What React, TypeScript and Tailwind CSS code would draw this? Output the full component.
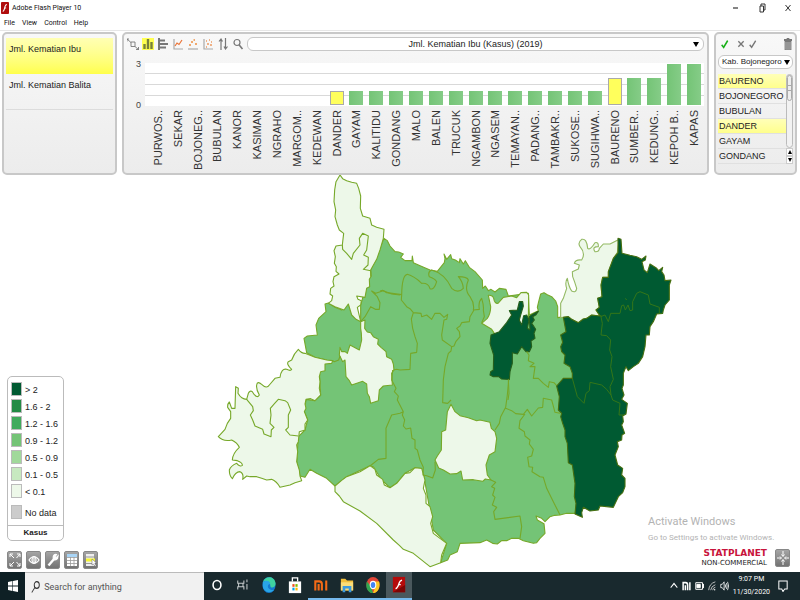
import type { ReactNode } from "react";

const LIGHT = "#edf8e9";
const MID = "#74c476";
const DARK = "#005a32";

const chart: [string, number][] = [
  ["PURWOS..", 0], ["SEKAR", 0], ["BOJONEG..", 0], ["BUBULAN", 0], ["KANOR", 0],
  ["KASIMAN", 0], ["NGRAHO", 0], ["MARGOM..", 0], ["KEDEWAN", 0], ["DANDER", 1],
  ["GAYAM", 1], ["KALITIDU", 1], ["GONDANG", 1], ["MALO", 1], ["BALEN", 1],
  ["TRUCUK", 1], ["NGAMBON", 1], ["NGASEM", 1], ["TEMAYAN..", 1], ["PADANG..", 1],
  ["TAMBAKR..", 1], ["SUKOSE..", 1], ["SUGIHWA..", 1], ["BAURENO", 2], ["SUMBER..", 2],
  ["KEDUNG..", 2], ["KEPOH B..", 3], ["KAPAS", 3],
];
const selected = ["DANDER", "BAURENO"];
const districts = ["BAURENO", "BOJONEGORO", "BUBULAN", "DANDER", "GAYAM", "GONDANG"];
const classes: [string, string][] = [
  ["#005a32", "> 2"], ["#238b45", "1.6 - 2"], ["#41ab5d", "1.2 - 1.6"], ["#74c476", "0.9 - 1.2"],
  ["#a1d99b", "0.5 - 0.9"], ["#c7e9c0", "0.1 - 0.5"], ["#edf8e9", "< 0.1"],
];

const PANEL = "rounded-[5px] border-2 border-[#c8c8c8] bg-linear-to-b from-[#f8f8f8] to-[#ececec]";
const SYSTEM_FONT = "font-[Roboto,'Open_Sans',sans-serif]";

function Icon({ children, box = "0 0 12 12", className = "h-3 w-3" }: { children: ReactNode; box?: string; className?: string }) {
  return (
    <svg viewBox={box} className={className} preserveAspectRatio="none" fill="none" stroke="#777" strokeWidth="1.2" aria-hidden="true">
      {children}
    </svg>
  );
}

function ToolButton({ label, children, className = "" }: { label: string; children: ReactNode; className?: string }) {
  return (
    <button type="button" aria-label={label} className={`flex h-3 items-center justify-center ${className}`}>
      {children}
    </button>
  );
}

function TitleBar() {
  return (
    <header className={`border-b border-[#e6e6e6] bg-white text-[#111] ${SYSTEM_FONT}`}>
      <div className="flex h-4 items-center pr-2 pl-px">
        <svg viewBox="0 0 9 12" preserveAspectRatio="none" className="h-3 w-2" aria-hidden="true">
          <rect width="9" height="12" rx="1" fill="#b00d0d" />
          <path d="M6.6 2.5C4.5 2.8 4.4 5 3.8 7S2.9 9.3 2 9.5M3.7 6H5.8" stroke="#fff" strokeWidth="1.2" fill="none" />
        </svg>
        <h1 className="ml-[3px] flex-1 text-[7px] leading-4">Adobe Flash Player 10</h1>
        <div className="flex w-15 items-center justify-between">
          <button type="button" aria-label="Minimize"><Icon box="0 0 8 10" className="h-2.5 w-2"><path d="M1 5H6" stroke="#333" /></Icon></button>
          <button type="button" aria-label="Restore"><Icon box="0 0 8 10" className="h-2.5 w-2"><path d="M2 3H5.5V9H2ZM3 3V1H7V7H5.5" stroke="#333" strokeWidth="1" /></Icon></button>
          <button type="button" aria-label="Close"><Icon box="0 0 8 10" className="h-2.5 w-2"><path d="M1.5 2L6.5 8M6.5 2L1.5 8" stroke="#333" strokeWidth="1" /></Icon></button>
        </div>
      </div>
      <nav className="flex h-3.5 items-center gap-[7px] pl-1 text-[7px] leading-3">
        {["File", "View", "Control", "Help"].map((m) => <button type="button" key={m}>{m}</button>)}
      </nav>
    </header>
  );
}

function Indicators() {
  return (
    <aside className={`w-[115px] shrink-0 px-0.5 py-1 text-[9px] leading-3 ${PANEL}`}>
      <button type="button" className="flex h-9 w-full items-start bg-linear-to-b from-[#ffffb4] to-[#ffff4a] px-[3px] pt-[5px]">
        Jml. Kematian Ibu
      </button>
      <button type="button" className="flex h-9 w-full items-start border-b border-[#dcdcdc] px-[3px] pt-[5px]">
        Jml. Kematian Balita
      </button>
    </aside>
  );
}

function ChartTools() {
  return (
    <div className="flex h-3.5 shrink-0 items-center gap-[3px]">
      <ToolButton label="Map link"><Icon><path d="M0 1L4 4.5M8 8.5L12 12M0 3.500V1H2M4 4H8V8.500H4ZM11.500 9V11.500H9" strokeWidth="0.900" /></Icon></ToolButton>
      <ToolButton label="Column chart" className="bg-[#ffff52]"><Icon><path d="M2.5 11V6M6 11V1M9.5 11V4" stroke="#77803a" strokeWidth="2.4" /></Icon></ToolButton>
      <ToolButton label="Bar chart"><Icon><path d="M2 0V12M3 2.5H8M3 6H11M3 9.5H9" strokeWidth="2" /></Icon></ToolButton>
      <ToolButton label="Line chart"><Icon><path d="M2 1V11H11" stroke="#aaa" /><path d="M3 8L5 5L7 6.5L10 2" stroke="#eb7336" /></Icon></ToolButton>
      <ToolButton label="Time scatter plot"><Icon><path d="M1 11H11" stroke="#aaa" /><path d="M2 7H4M4 4H6M6.5 2H8M8 6H10" stroke="#ed8f42" strokeWidth="1.7" /></Icon></ToolButton>
      <ToolButton label="Scatter plot"><Icon><path d="M2 1V11H11" stroke="#aaa" /><path d="M4 3H5M7 2H8M5 6H7M8 7H10M4 9H5M9 4H10" stroke="#ed9a62" strokeWidth="1.6" /></Icon></ToolButton>
      <ToolButton label="Sort"><Icon><path d="M4 12V1M2 3.5L4 1L5.5 3.5M8.5 0V11M7 8.5L8.5 11L10.5 8.5" /></Icon></ToolButton>
      <ToolButton label="Zoom"><Icon><circle cx="5" cy="4.5" r="3" /><path d="M7.2 7L10.5 11" strokeWidth="1.6" /></Icon></ToolButton>
    </div>
  );
}

function ChartPanel() {
  return (
    <section className={`flex min-w-0 flex-1 flex-col pr-[3px] pl-[3px] ${PANEL}`}>
      <div className="mt-[3px] flex items-center gap-[3px]">
        <ChartTools />
        <div className="relative flex h-3.5 flex-1 rounded-md border border-[#c8c8c8] bg-white">
          <select aria-label="Indicator" className="h-3 w-full appearance-none bg-transparent text-center text-[9px] leading-3">
            <option>Jml. Kematian Ibu (Kasus) (2019)</option>
          </select>
          <span className="pointer-events-none absolute top-1 right-1 border-x-[3px] border-t-[5px] border-x-transparent border-t-black" />
        </div>
      </div>
      <div className="mt-3 flex h-[43px]">
        <div className="flex w-[18px] flex-col justify-between pr-1 text-right text-[9px] leading-[10px] text-[#444]">
          <span className="-mt-1">3</span>
          <span className="-mb-1">0</span>
        </div>
        <div className="grid flex-1 grid-cols-[repeat(28,minmax(0,1fr))] items-end bg-white bg-[linear-gradient(to_bottom,transparent_10px,#d9d9d9_10px,#d9d9d9_11px,transparent_11px,transparent_21px,#d9d9d9_21px,#d9d9d9_22px,transparent_22px,transparent_32px,#d9d9d9_32px,#d9d9d9_33px,transparent_33px)] pb-px pl-[3px]">
          {chart.map(([name, v]) => (
            <span
              key={name}
              className={`mx-auto w-3.5 ${selected.includes(name) ? "border border-[#aaa] bg-[#ffff5c]" : "bg-linear-to-r from-[#74c476] to-[#85cc87]"}`}
              style={{ height: v === 0 ? 0 : v * 14 - (v > 1 ? 1 : 0) }}
            />
          ))}
        </div>
      </div>
      <div className="mt-1 ml-[18px] grid h-[63px] grid-cols-[repeat(28,minmax(0,1fr))] pl-[3px]">
        {chart.map(([name]) => (
          <div key={name} className="flex items-start justify-center">
            <span className="rotate-180 text-[11px] leading-3 whitespace-nowrap text-[#333] [writing-mode:vertical-rl]">{name}</span>
          </div>
        ))}
      </div>
    </section>
  );
}

function DistrictPanel() {
  return (
    <aside className={`w-[83px] shrink-0 px-0.5 ${PANEL}`}>
      <div className="mt-[3px] flex h-3.5 items-center pr-px pl-[3px]">
        <ToolButton label="Select all"><Icon className="h-2.5 w-2"><path d="M1 7L4 10L10 2" stroke="#18b018" strokeWidth="2.2" /></Icon></ToolButton>
        <ToolButton label="Clear selection" className="ml-2"><Icon className="h-2 w-2"><path d="M2 2L10 10M10 2L2 10" strokeWidth="2" /></Icon></ToolButton>
        <ToolButton label="Invert selection" className="ml-1"><Icon className="h-2.5 w-2"><path d="M1 7L4 10L10 2" strokeWidth="2" /></Icon></ToolButton>
        <ToolButton label="Delete" className="ml-auto"><Icon className="h-3 w-2"><path d="M0 2H12M4 1H8" strokeWidth="2" /><path d="M1.5 3.5H10.5V12H1.5Z" fill="#aaa" /><path d="M4.5 4V11M7.5 4V11" /></Icon></ToolButton>
      </div>
      <div className="relative mt-1 flex h-3.5 rounded-md border border-[#c8c8c8] bg-white">
        <select aria-label="Region" className="h-3 w-full appearance-none bg-transparent pl-[3px] text-[8px] leading-3">
          <option>Kab. Bojonegoro</option>
        </select>
        <span className="pointer-events-none absolute top-1 right-0.5 border-x-[3px] border-t-[5px] border-x-transparent border-t-black" />
      </div>
      <div className="mt-[5px] flex">
        <ul className="min-w-0 flex-1 text-[9px]">
          {districts.map((d) => (
            <li key={d} className="border-b border-[#e0e0e0]">
              <button type="button" className={`block h-3.5 w-full pl-px text-left leading-[14px] ${selected.includes(d) ? "bg-linear-to-b from-[#ffffb8] to-[#ffff8c]" : ""}`}>{d}</button>
            </li>
          ))}
        </ul>
        <div className="flex w-[7px] flex-col items-center" role="group" aria-label="Scroll list">
          <div className="w-full flex-1 rounded-full border border-[#bbb] bg-[#f2f2f2]">
            <div className="flex h-[26px] items-center justify-center rounded-full border border-[#aaa] bg-[#eee]">
              <span className="h-1.5 w-[3px] border-y border-[#aaa]" />
            </div>
          </div>
          <button type="button" aria-label="Scroll up" className="flex h-2 w-full items-center justify-center border border-[#ccc] bg-white"><span className="border-x-2 border-b-4 border-x-transparent border-b-black" /></button>
          <button type="button" aria-label="Scroll down" className="flex h-2 w-full items-center justify-center border border-[#ccc] bg-white"><span className="border-x-2 border-t-4 border-x-transparent border-t-black" /></button>
        </div>
      </div>
    </aside>
  );
}

function DistrictMap() {
  return (
    <svg viewBox="0 525 2400 1191" className="absolute inset-0 h-full w-full" role="img" aria-label="Map of Kab. Bojonegoro">
      <g stroke="#76a829" strokeWidth="3.3" strokeLinejoin="round" fill="none">
        {/* body of the regency */}
        <path fill={MID} d="M1152 715L1162 722L1170 738L1185 755L1196 756L1210 762L1202 772L1215 782L1236 782L1237 768L1240 788L1262 798L1290 810L1312 814L1333 788L1335 776L1332 762L1340 778L1352 764L1355 776L1366 780L1378 788L1380 776L1390 792L1396 782L1408 802L1425 815L1447 840L1448 865L1456 858L1465 872L1473 868L1485 876L1498 865L1518 868L1525 888L1585 880L1588 945L1615 932L1612 922L1616 905L1622 882L1632 878L1642 884L1655 890L1667 903L1673 920L1673 953L1695 950L1760 1140L1760 1400L1725 1540L1700 1540L1680 1545L1664 1546L1650 1550L1635 1565L1625 1555L1608 1548L1612 1560L1632 1571L1635 1600L1620 1615L1610 1628L1600 1630L1570 1622L1555 1615L1535 1615L1520 1622L1505 1622L1492 1632L1478 1630L1460 1620L1440 1628L1380 1630L1372 1655L1350 1665L1343 1680L1322 1688L1340 1630L1300 1590L1272 1430L1245 1403L1215 1420L1190 1450L1170 1463L1145 1440L1120 1400L1110 1397L1040 1430L1005 1458L980 1435L950 1420L930 1408L915 1432L900 1428L890 1385L895 1310L915 1290L923 1260L913 1235L918 1198L945 1202L962 1185L958 1115L980 1080L945 1072L920 1058L912 1015L922 1008L952 1005L948 975L956 955L978 935L975 912L985 909L1005 922L1025 930L1045 912L1082 965L1082 915L1112 810Z" />
        <g transform="translate(600 510)">
          <path fill={LIGHT} d="M420 15L428 26L440 32L455 37L470 40L476 55L482 78L481 115L488 138L510 145L515 165L530 172L552 178L550 205L540 240L530 268L512 300L514 318L508 328L509 350L500 355L495 382L470 378L474 388L484 392L482 405L472 412L475 425L482 455L468 448L455 435L445 402L432 420L405 410L385 400L395 392L398 378L390 372L392 355L402 348L399 335L402 320L417 312L408 304L409 290L403 280L406 260L402 242L408 228L427 225L431 190L418 180L412 165L405 140L407 120L402 95L404 60L408 35Z" />
          <path d="M427 225L428 238L440 250L455 268L460 250L480 225L478 205L488 190L505 198L500 240L491 255L505 262L504 285L490 298L512 302L512 320M482 455L495 440L512 410L526 418L538 418L540 398L532 380L515 363L527 370L550 362L575 372L600 375" />
          <path fill={LIGHT} d="M482 455L495 450L494 475L502 486L512 488L520 500L535 508L533 522L543 532L558 545L560 560L575 568L580 582L582 600L575 610L577 645L550 648L538 660L535 692L512 700L508 680L502 670L500 642L488 634L475 638L455 645L448 632L438 620L435 570L428 575L418 555L420 532L425 545L435 545L442 550L450 525L478 540L485 510L484 490L482 475Z" />
        </g>
        <g transform="translate(600 1020)">
          <path fill={LIGHT} d="M295 28Q304 40 315 40L345 52L380 60L398 62L395 70L375 72L375 92L362 95L358 110L360 125L358 145L362 165L345 182L332 176L318 178L315 192L318 205L313 215L323 240L315 252L315 270L298 275L295 305L290 315L293 335L290 365L298 390L300 408L305 422L285 428L270 435L240 442Q230 424 215 418L200 420L185 415L170 410L150 410L140 408L128 418Q132 400 120 395Q106 396 97 416Q88 408 88 390Q92 378 110 370Q120 382 127 376Q128 368 112 362L97 360Q98 340 118 322Q112 308 95 300Q70 306 55 290Q66 278 75 268L82 250L92 235L92 215L83 202Q82 192 88 186L95 205L105 205L107 140L115 145L114 160Q124 178 140 178L145 160Q150 150 157 155Q170 178 178 165Q168 148 170 135Q172 122 185 133Q200 148 208 135L225 115L240 112Q244 84 260 88Q272 94 275 88Q258 72 265 65L275 60Q282 40 295 28Z" />
          <path d="M140 178L158 200L160 212L151 225L158 240L165 258L188 268L192 282L213 290L214 270L222 262L210 250L213 225L211 205L224 190L235 178L255 182L263 188L272 210L265 225L265 262L257 270L270 285L295 288M398 62L403 65L416 60L420 48" />
        </g>
        <path fill={LIGHT} d="M1005 1458L1005 1475L1018 1488L1030 1505L1080 1533L1130 1570L1180 1620L1198 1636L1210 1648L1240 1660Q1265 1680 1290 1700L1322 1688L1325 1665L1340 1630L1320 1615L1300 1600L1292 1570L1298 1550L1290 1520L1278 1510L1278 1485L1270 1465L1275 1440L1265 1405L1245 1403L1230 1418L1215 1420L1190 1450L1170 1463L1153 1455L1148 1438L1130 1425L1125 1408L1110 1397L1080 1415L1040 1430L1024 1442Z" />
        <g transform="translate(1140 1140)">
          <path fill={LIGHT} d="M213 73L225 95L240 107L265 113L290 122L300 120L330 127L334 145L345 155L350 175L345 215L328 225L318 255L322 285L333 300L316 297L308 304L280 299L248 300L243 273L230 281L210 282L190 270L176 264L165 240L172 228L184 210L185 155L197 150L202 95Z" />
          <path d="M386 0L382 45L377 82L362 110L358 130L345 150M377 85L395 92L407 101L430 103L442 88L455 108L475 84L488 82L490 55L515 60L525 97L540 100M435 102L420 122L417 145L433 155L435 168L450 180L448 192L460 208L455 228L443 232L447 260L458 262L456 275L480 290L490 292L500 325L520 365L540 405M333 300L347 307L335 320L344 325L338 345L345 352L337 375L350 382L341 395L345 418L420 408L425 440L420 475" />
          <path d="M38 -30L35 0L48 25L43 35L55 48L52 60L70 95L67 105L74 120L70 138L78 147L92 144L96 175L105 180L105 205L112 210L120 240L130 262L129 285L140 287L158 294L166 270L165 245M70 95L60 100L35 105L18 145L18 235L-5 238L-30 258" />
        </g>
        <g transform="translate(1140 660)">
          <path fill={LIGHT} d="M325 226Q338 225 341 235Q344 252 354 250L370 232L395 228L410 233L423 218L440 217L446 225L445 300L420 340L345 343L335 328L305 310L322 295Q332 280 332 260Z" />
          <path fill={DARK} stroke="#265f1b" d="M418 245L428 245L430 258L422 285L418 300L425 315L431 287L440 285L447 300L442 325L450 330L448 290L453 286L475 274L468 284L458 290L463 300L455 310L462 320L467 328L462 340L465 355L453 363L455 380L448 395L438 395L425 380L412 402L397 398L397 430L390 455L388 478L365 477L356 470L340 470L330 465L332 455L340 450L341 405L330 370L333 345L358 335L380 308L395 285L388 272L412 270Z" />
          <path d="M0 213L8 211L20 218L65 224L64 240L80 260L90 266L100 278L94 297L98 325L105 350L112 370L110 397L92 400L90 448L60 450L50 448L40 450M65 224Q66 165 82 163Q102 168 125 190Q145 188 150 206Q162 212 170 185Q164 175 148 170Q142 156 155 150Q194 160 215 205Q234 222 250 205Q248 184 235 170Q262 170 265 180Q252 210 270 230Q284 250 280 270L298 268Q294 246 305 235Q312 258 310 270L313 290L305 308M100 278L123 280L125 290L140 285L155 298L165 280L180 280L192 292L203 283L200 298L192 300L185 345L187 360L215 380L222 378L228 364L240 350L238 335L230 325L240 318L245 308L268 305L270 290L282 270M215 380L213 393L205 400L195 440L190 480L188 548L203 550L213 540M385 478L387 520L384 540M440 395L447 405L445 422L462 430L450 440L465 440L460 475L475 475L490 490L505 502L508 485L522 488L530 497" />
        </g>
        <g transform="translate(1620 660)">
          <path fill={LIGHT} stroke="#93b963" d="M238 58L210 72L190 72L178 85Q178 96 165 95Q155 80 175 80Q176 65 165 68Q150 92 143 85Q140 54 125 58Q112 68 120 80Q138 100 125 120Q106 118 103 130L118 135L115 147L97 155L98 170Q104 185 110 205Q108 220 95 213Q86 200 82 175Q74 186 80 205L70 235L62 250L62 293L70 292L85 290L95 298L115 308L130 297L140 295L155 285L180 288L168 270L178 262L173 235L186 230L183 195L188 172L205 172L205 155L220 115L232 98Z" />
          <path fill={DARK} stroke="#476f10" d="M234 55L243 58L246 100L270 106L290 110L305 118L318 108L316 120L306 125L312 150L322 158L330 132L350 145L356 152L368 142L365 155L372 165L375 182L393 180L388 195L388 240L375 255L370 270L368 280L350 282L340 305L330 320L328 345L318 345L315 380L308 410L295 430L280 440L265 452L258 440L250 460L250 495L246 505L252 525L245 538L262 550L258 582L248 588L250 605L245 615L254 640L246 645L245 660L232 665L235 680L225 705L233 735L248 745L245 765L255 775L255 800L248 818L235 830L220 862L180 858L175 870L150 873L130 862L125 878L127 892L105 882L108 850L103 830L105 790L97 735L85 728L82 670L75 650L75 630L68 610L62 590L65 580L55 570L58 530L50 498L70 475L97 475L97 460L90 440L72 430L75 405L65 395L62 380L68 367L62 345L78 335L70 292L85 290L95 298L115 308L130 297L140 295L155 285L180 288L168 270L178 262L173 235L186 230L183 195L188 172L205 172L205 155L220 115L234 98Z" />
          <path stroke="#347619" strokeWidth="3" d="M182 285L187 310L183 345L200 347L212 360L209 390L216 410L212 440L220 478L210 500L213 525L200 508L185 495L150 487L148 512L138 520L132 550L112 530L97 475M213 525L218 540L240 550L237 585L252 585M182 290L195 285L205 305L212 280L240 280L245 257L251 255L256 270L264 255L270 272L278 270L278 245L290 220L300 215L325 225L330 252L358 262L358 280L368 280M256 235L260 240" />
        </g>
      </g>
    </svg>
  );
}

function Legend() {
  return (
    <div className="w-[57px] rounded-[5px] border border-[#bbb] bg-white text-[9px] whitespace-nowrap">
      <ul className="px-[3px] pt-[5px]">
        {classes.map(([c, label]) => (
          <li key={label} className="flex h-[17px] items-start gap-[3px] leading-[17px]">
            <span className="h-3.5 w-[11px] border border-[#bbb]" style={{ backgroundColor: c }} />
            <span>{label}</span>
          </li>
        ))}
        <li className="mt-1 flex h-5 items-start gap-[3px] leading-[17px]">
          <span className="h-3.5 w-[11px] border border-[#bbb] bg-[#ccc]" />
          <span>No data</span>
        </li>
      </ul>
      <p className="border-t border-[#bbb] text-center text-[8px] leading-[14px] font-bold">Kasus</p>
    </div>
  );
}

function MapButton({ label, children }: { label: string; children: ReactNode }) {
  return (
    <button type="button" aria-label={label} className="flex h-[18px] w-[15px] items-center justify-center rounded-xs border border-[#888] bg-linear-to-b from-[#a5a5a5] to-[#737373]">
      <Icon box="0 0 12 14" className="h-3.5 w-3">{children}</Icon>
    </button>
  );
}

function MapArea() {
  return (
    <main className="relative flex flex-1 items-end justify-between bg-white">
      <DistrictMap />
      <div className="relative pb-[3px] pl-[7px]">
        <Legend />
        <div className="mt-2.5 flex gap-1">
          <MapButton label="Full screen"><path d="M1 4V1H4M1 1L5 5M8 1H11V4M11 1L7.5 5M1 10V13H4M1 13L5 9M11 10V13H8M11 13L7.5 9" stroke="#fff" strokeWidth="1" /></MapButton>
          <MapButton label="View"><path d="M1 7Q6 0 11 7Q6 14 1 7Z" stroke="#fff" /><ellipse cx="6" cy="7" rx="2" ry="3" stroke="#fff" /><path d="M6 5V9" stroke="#fff" /></MapButton>
          <MapButton label="Settings"><path d="M1.5 12.5L7 6" stroke="#fff" strokeWidth="2.4" /><path d="M9.5 1.5Q6 1 6.2 5Q7 8.500 10.500 5.500L11 3L8.800 5L8 4Z" fill="#fff" stroke="#fff" /></MapButton>
          <MapButton label="Data table"><path d="M1 1H11V13H1Z" fill="#fff" stroke="none" /><path d="M1 1H11V4H1Z" fill="#a8d4f5" stroke="none" /><path d="M1 4.500H11M1 7.500H11M1 10.500H11M4.500 4V13M8 4V13" stroke="#999" strokeWidth="0.800" /></MapButton>
          <MapButton label="Selection"><path d="M1 1H9V13H1Z" fill="#eee" stroke="none" /><path d="M1 4H9M1 10.500H9" stroke="#999" /><path d="M1 7H10" stroke="#f6f632" strokeWidth="3" /><path d="M7 6V12L8.500 11L10 13.500L11 12.500L9.800 10H11.500Z" fill="#fff" stroke="#666" strokeWidth="0.500" /></MapButton>
        </div>
      </div>
      <div className="relative flex flex-col items-end pr-2.5 pb-1">
        <div className={`w-[142px] whitespace-nowrap text-[#b3b3b3] ${SYSTEM_FONT}`}>
          <p className="text-[11px] leading-4">Activate Windows</p>
          <p className="text-[8px] leading-4">Go to Settings to activate Windows.</p>
        </div>
        <div className="mt-0.5 flex items-center gap-2">
          <div className="flex flex-col items-end whitespace-nowrap">
            <p className="font-['DejaVu_Sans',Verdana,sans-serif] text-[9px] leading-[10px] font-bold text-[#c8143c]">STATPLANET</p>
            <p className="font-['DejaVu_Sans',Verdana,sans-serif] text-[7px] leading-[10px] text-[#222]">NON-COMMERCIAL</p>
          </div>
          <MapButton label="Collapse"><path d="M6 0V5M4.500 3.500L6 5.500L7.500 3.500M6 14V9M4.500 10.500L6 8.500L7.500 10.500M0 7H4M3 5.500L4.500 7L3 8.500M12 7H8M9 5.500L7.500 7L9 8.500" stroke="#fff" strokeWidth="1" /></MapButton>
        </div>
      </div>
    </main>
  );
}

function TaskButton({ label, open, active, children }: { label: string; open?: boolean; active?: boolean; children: ReactNode }) {
  return (
    <button type="button" aria-label={label} className={`flex w-[26px] items-center justify-center border-b-2 ${open ? "border-[#76b9ed]" : "border-transparent"} ${active ? "bg-[#4a585d]" : ""}`}>
      <Icon box="0 0 16 20" className="h-[18px] w-3.5">{children}</Icon>
    </button>
  );
}

function Taskbar() {
  return (
    <footer className={`flex h-7 bg-[#19292e] text-white ${SYSTEM_FONT}`}>
      <button type="button" aria-label="Start" className="flex w-[25px] items-center justify-center bg-[#0e2025]">
        <Icon className="h-3 w-2.5"><path d="M0 2L5.300 1V5.600H0ZM6 1L12 0V5.600H6ZM0 6.400H5.300V11L0 10ZM6 6.400H12V12L6 11Z" fill="#fff" stroke="none" /></Icon>
      </button>
      <label className="flex w-[179px] items-center gap-1 border-t border-[#bbb] bg-[#f1f1f1] pl-1.5">
        <Icon className="h-3 w-2.5"><circle cx="7.500" cy="4" r="3.300" stroke="#333" /><path d="M5 6.500L1 11.500" stroke="#333" /></Icon>
        <input type="text" aria-label="Search" placeholder="Search for anything" className="w-full bg-transparent text-[9px] leading-3 outline-none placeholder:text-[#555]" />
      </label>
      <div className="flex">
        <TaskButton label="Cortana"><ellipse cx="8" cy="10" rx="4.500" ry="5" stroke="#fff" strokeWidth="1.800" /></TaskButton>
        <TaskButton label="Task view"><path d="M2 5V8H9V5M2 15V12H9V15M3 8V12M8 8V12M12.500 4V7M12.500 9V15" stroke="#c5cacc" /></TaskButton>
        <TaskButton label="Edge">
          <ellipse cx="8" cy="10" rx="7.500" ry="9" fill="#1479cf" stroke="none" />
          <path d="M1 7C3 0 14-1 15.500 8C16 13 10 14 9.500 11C10 6 4 4 1 7Z" fill="#3fd1a0" stroke="none" />
          <path d="M1 7C4 4 9 5 9.500 9C8 9 6 10 7 13C9 16 13 16 14 15C10 20 2 18 1 12Z" fill="#29a5e6" stroke="none" />
        </TaskButton>
        <TaskButton label="Microsoft Store"><path d="M5 6V2H11V6" stroke="#fff" strokeWidth="1.500" /><path d="M1 6H15V19H1Z" fill="#fff" stroke="none" /><path d="M5 9H7.500V12H5Z" fill="#f25022" stroke="none" /><path d="M8.500 9H11V12H8.500Z" fill="#7fba00" stroke="none" /><path d="M5 13H7.500V16H5Z" fill="#00a4ef" stroke="none" /><path d="M8.500 13H11V16H8.500Z" fill="#ffb900" stroke="none" /></TaskButton>
        <TaskButton label="Mi" open><path d="M1.500 16V6H6Q9 6 9 9V16M5.300 9V16M14 5V16" stroke="#f56a16" strokeWidth="2.400" /></TaskButton>
        <TaskButton label="File Explorer" open><path d="M1 3H6L8 5H15V16H1Z" fill="#f2bf3c" stroke="none" /><path d="M1 7H15V16H1Z" fill="#fbdd79" stroke="none" /><path d="M3 18V11H13V18H10V14H6V18Z" fill="#3c9add" stroke="none" /></TaskButton>
        <TaskButton label="Chrome" open>
          <ellipse cx="8" cy="10" rx="7.500" ry="9" fill="#e24537" stroke="none" />
          <path d="M1 6L6 12L8 19C1 19-1 11 1 6Z" fill="#31a650" stroke="none" />
          <path d="M8 6H15C17 13 13 19 8 19L11 11Z" fill="#fbc722" stroke="none" />
          <ellipse cx="8" cy="10" rx="3.200" ry="4" fill="#4285f4" stroke="#fff" />
        </TaskButton>
        <TaskButton label="Flash Player" open active><rect x="1" y="1" width="14" height="17" fill="#b50a0a" stroke="none" /><path d="M1 18H15V10Z" fill="#7d0505" stroke="none" /><path d="M11.500 4.500C8 5 8 9 7 11S5.500 14 4 14M7 9.500H10" stroke="#fff" strokeWidth="1.500" /></TaskButton>
      </div>
      <div className="ml-auto flex items-center gap-1">
        <Icon className="h-2.5 w-2"><path d="M1 8L6 3L11 8" stroke="#fff" strokeWidth="1.500" /></Icon>
        <Icon className="h-2.5 w-[9px]"><path d="M1.500 11V2H5Q7.500 2 7.500 5V11M4.500 5V11M10.500 1.500V11" stroke="#fff" strokeWidth="2" /></Icon>
        <Icon className="h-2.5 w-[9px]"><path d="M1 2H10V10H1Z" stroke="#fff" /><path d="M2.500 4H7V8H2.500ZM11 4H12V8H11Z" fill="#fff" stroke="#fff" /></Icon>
        <Icon className="h-2.5 w-2"><path d="M1 11Q2 3 11 1M4 11Q5 6 11 4.500M7 11Q7.500 8 11 7.500" stroke="#ccc" /><circle cx="10" cy="10.500" r="1" fill="#fff" stroke="none" /></Icon>
        <Icon className="h-2.5 w-[9px]"><path d="M1 4H3L5.500 1V11L3 8H1ZM7 4Q8 6 7 8M8.500 2.500Q10.500 6 8.500 9.500M10 1Q13 6 10 11" stroke="#fff" strokeWidth="1" /></Icon>
        <div className="text-center text-[7px] leading-[13px] whitespace-nowrap">
          <p>9:07 PM</p>
          <p>11/30/2020</p>
        </div>
        <button type="button" aria-label="Notifications" className="mr-3 ml-1"><Icon className="h-3 w-2.5"><path d="M1 1H11V9H8L6 11.500L4.500 9H1Z" stroke="#fff" /></Icon></button>
      </div>
    </footer>
  );
}

export default function App() {
  return (
    <div className="flex min-h-screen flex-col bg-white font-['Liberation_Sans',Arial,sans-serif] text-[#222]">
      <TitleBar />
      <div className="flex gap-[5px] bg-white pt-px pr-[3px] pl-0.5">
        <Indicators />
        <ChartPanel />
        <DistrictPanel />
      </div>
      <MapArea />
      <Taskbar />
    </div>
  );
}
